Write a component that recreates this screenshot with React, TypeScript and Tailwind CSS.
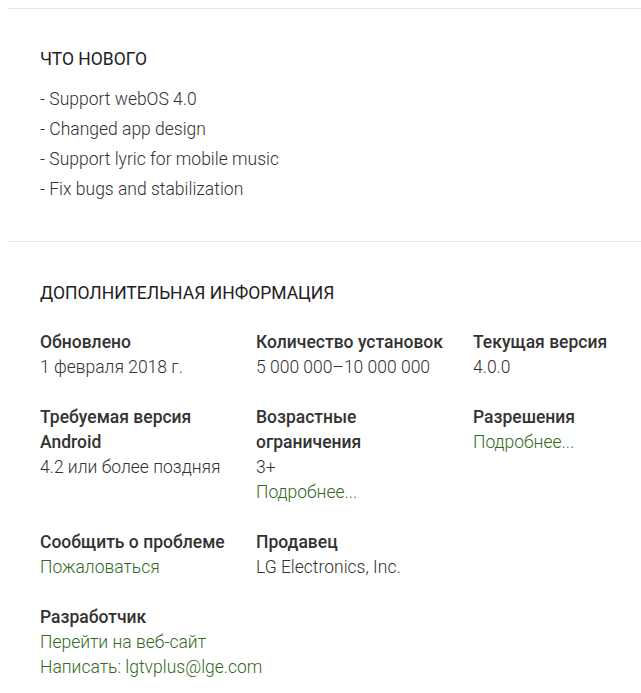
import React from "react";

const link = "text-[#33691e]";

function Info({ title, children }: { title: React.ReactNode; children: React.ReactNode }) {
  return (
    <div className="mb-[25px]">
      <div className="font-medium text-[#333] leading-[25px]">{title}</div>
      <div className="font-light text-[#333] leading-[25px] whitespace-nowrap [font-family:'Roboto_Light',Roboto,sans-serif]">{children}</div>
    </div>
  );
}

export default function App() {
  return (
    <div
      className="w-[641px] h-[693px] bg-white overflow-hidden pl-2 pt-2 text-[17.5px] [font-family:Roboto,'Noto_Sans',sans-serif]"
    >
      <section className="border-t border-[#e6e6e6] pl-8 pt-[38px] pb-[37px]">
        <h2 className="text-[17.5px] font-normal leading-6 text-[#212121] uppercase">Что нового</h2>
        <div className="mt-[13px] font-light text-[#333] leading-[30px] [font-family:'Roboto_Light',Roboto,sans-serif]">
          <div>- Support webOS 4.0</div>
          <div>- Changed app design</div>
          <div>- Support lyric for mobile music</div>
          <div>- Fix bugs and stabilization</div>
        </div>
      </section>
      <section className="border-t border-[#e6e6e6] pl-8 pt-[39px]">
        <h2 className="text-[17.5px] font-normal leading-6 text-[#212121] uppercase">Дополнительная информация</h2>
        <div className="mt-[25px] grid grid-cols-[216px_217px_1fr]">
          <Info title="Обновлено">1 февраля 2018 г.</Info>
          <Info title="Количество установок">5 000 000–10 000 000</Info>
          <Info title="Текущая версия">4.0.0</Info>
          <Info title={<>Требуемая версия<br />Android</>}>4.2 или более поздняя</Info>
          <Info title={<>Возрастные<br />ограничения</>}>
            3+
            <div className={link}>Подробнее...</div>
          </Info>
          <Info title="Разрешения">
            <span className={link}>Подробнее...</span>
          </Info>
          <Info title="Сообщить о проблеме">
            <span className={link}>Пожаловаться</span>
          </Info>
          <Info title="Продавец">LG Electronics, Inc.</Info>
          <div />
          <Info title="Разработчик">
            <div className={link}>Перейти на веб-сайт</div>
            <div className={link}>Написать: lgtvplus@lge.com</div>
          </Info>
        </div>
      </section>
    </div>
  );
}
